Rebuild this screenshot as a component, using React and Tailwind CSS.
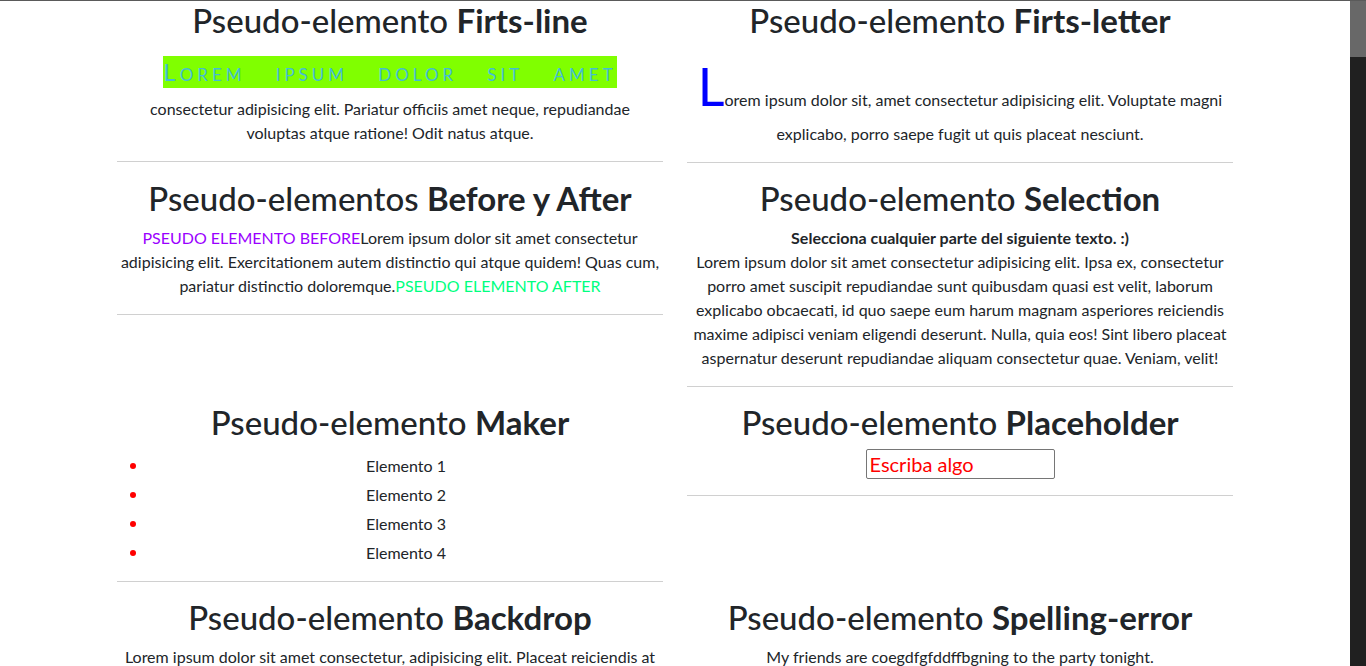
export default function App() {
  const Title = ({ a, b }) => (
    <h2 className="mb-2 text-center text-[33px] font-medium leading-[38.4px] text-[#212529]">
      {a} <b className="font-bold">{b}</b>
    </h2>
  );
  const Line = () => <hr className="my-4 border-t border-[#d0d0d0]" />;

  return (
    <div
      className="flex h-[666px] overflow-hidden border-t border-[#5a5a5a] bg-white text-[16px] leading-[1.5] text-[#212529]"
      style={{ fontFamily: 'Lato, "Noto Sans", sans-serif' }}
    >
      <div className="flex-1 overflow-hidden">
        <div className="mx-auto grid w-[1116px] grid-cols-2 items-start gap-x-6">
          {/* fila 1 */}
          <div>
            <Title a="Pseudo-elemento" b="Firts-line" />
            <div className="text-center">
              <div className="flex h-[50px] items-center justify-center">
                <span className="bg-[#80ff00] text-[24px] leading-[32px] tracking-[4px] text-[#44bcd4] [font-variant:small-caps] [word-spacing:20px]">
                  Lorem ipsum dolor sit amet
                </span>
              </div>
              <p className="whitespace-nowrap">
                consectetur adipisicing elit. Pariatur officiis amet neque, repudiandae
                <br />
                voluptas atque ratione! Odit natus atque.
              </p>
            </div>
            <Line />
          </div>
          <div>
            <Title a="Pseudo-elemento" b="Firts-letter" />
            <p className="whitespace-nowrap pt-[3px] text-center">
              <span className="text-[52px] leading-[72px] text-[#0000ff]">L</span>orem ipsum dolor sit, amet consectetur adipisicing elit. Voluptate magni
              <br />
              explicabo, porro saepe fugit ut quis placeat nesciunt.
            </p>
            <Line />
          </div>

          {/* fila 2 */}
          <div>
            <Title a="Pseudo-elementos" b="Before y After" />
            <p className="whitespace-nowrap text-center">
              <span className="text-[#9b00ff]">PSEUDO ELEMENTO BEFORE</span>Lorem ipsum dolor sit amet consectetur
              <br />
              adipisicing elit. Exercitationem autem distinctio qui atque quidem! Quas cum,
              <br />
              pariatur distinctio doloremque.<span className="text-[#00ff7f]">PSEUDO ELEMENTO AFTER</span>
            </p>
            <Line />
          </div>
          <div>
            <Title a="Pseudo-elemento" b="Selection" />
            <p className="whitespace-nowrap text-center">
              <b className="font-bold">Selecciona cualquier parte del siguiente texto. :)</b>
              <br />
              Lorem ipsum dolor sit amet consectetur adipisicing elit. Ipsa ex, consectetur
              <br />
              porro amet suscipit repudiandae sunt quibusdam quasi est velit, laborum
              <br />
              explicabo obcaecati, id quo saepe eum harum magnam asperiores reiciendis
              <br />
              maxime adipisci veniam eligendi deserunt. Nulla, quia eos! Sint libero placeat
              <br />
              aspernatur deserunt repudiandae aliquam consectetur quae. Veniam, velit!
            </p>
            <Line />
          </div>

          {/* fila 3 */}
          <div>
            <Title a="Pseudo-elemento" b="Maker" />
            <ul className="mb-[14px] list-disc pl-8 pt-[2px] marker:text-[19.2px] marker:text-[#ff0000]">
              {["Elemento 1", "Elemento 2", "Elemento 3", "Elemento 4"].map((e) => (
                <li key={e} className="text-center leading-[28px]">
                  {e}
                </li>
              ))}
            </ul>
            <hr className="mb-4 border-t border-[#d0d0d0]" />
          </div>
          <div>
            <Title a="Pseudo-elemento" b="Placeholder" />
            <div className="flex justify-center">
              <input
                type="text"
                placeholder="Escriba algo"
                className="h-[30px] w-[189px] rounded-[2px] border border-[#767676] px-[3px] text-[20px] leading-[1.2] placeholder:text-[#ff0000] focus:outline-none"
              />
            </div>
            <Line />
          </div>

          {/* fila 4 */}
          <div>
            <Title a="Pseudo-elemento" b="Backdrop" />
            <p className="whitespace-nowrap text-center">
              Lorem ipsum dolor sit amet consectetur, adipisicing elit. Placeat reiciendis at
              <br />
              nihil quam, dolores eveniet sequi tempora cumque modi illum.
            </p>
          </div>
          <div>
            <Title a="Pseudo-elemento" b="Spelling-error" />
            <p className="text-center">My friends are coegdfgfddffbgning to the party tonight.</p>
          </div>
        </div>
      </div>
      {/* barra de desplazamiento */}
      <div className="flex w-4 flex-col bg-[#202020]">
        <div className="h-[56px] bg-[#686868]" />
      </div>
    </div>
  );
}
